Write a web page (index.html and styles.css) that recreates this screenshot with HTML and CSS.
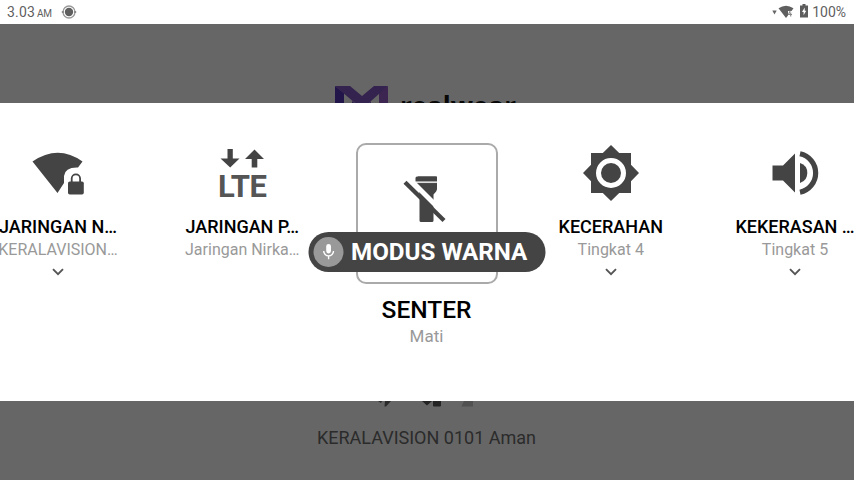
FILE: index.html
```html
<!DOCTYPE html>
<html lang="id">
<head>
<meta charset="utf-8">
<title>Kontrol</title>
<link rel="stylesheet" href="styles.css">
</head>
<body>
<header class="status">
  <span class="clock">3.03<small>AM</small></span>
  <svg class="status-cam" width="16" height="16" viewBox="0 0 16 16"><circle cx="8" cy="8" r="6" fill="none" stroke="#999" stroke-width="1.300"/><circle cx="8" cy="8" r="4.200" fill="#5f5f5f"/><path d="M.800 8h2M13.200 8h2" stroke="#777" stroke-width="1.600"/></svg>
  <div class="status-right">
    <svg width="5" height="5" viewBox="0 0 5 5"><path d="M.3.5h4.400L2.500 4.500z" fill="#666"/></svg>
    <svg class="status-wifi" width="16" height="14" viewBox="0 0 16 14"><path d="M.5 3.200Q8-1.800 15.500 3.200L13.500 6H10v4.500L8 13z" fill="#5f5f5f"/><path d="M12.300 5.500L10.500 9.500H14M12.700 7.500v4" fill="none" stroke="#888" stroke-width="1.100"/></svg>
    <svg class="status-bat" width="8" height="14" viewBox="0 0 8 14"><path d="M2.500 0h3v1.500H8V13.500H0V1.500h2.500z" fill="#5c5c5c"/><path d="M4.700 3.500L2 8h1.600v3.200L6.200 6.800H4.700z" fill="#fff"/></svg>
    <span class="percent">100%</span>
  </div>
</header>

<section class="backdrop backdrop-top">
  <svg class="logo" width="53" height="53" viewBox="0 0 53 53"><path d="M0 0L9 7V53H0z" fill="#21154a"/><path d="M53 0L44 7V53H53z" fill="#3c2550"/><path d="M0 0H15L27 10 39 0H53L27 23z" fill="#35234f"/><path d="M17 15L27 23V40L17 31z" fill="#2a1c4c"/><path d="M36 15L27 23V40L36 31z" fill="#382551"/></svg>
  <span class="brand">realwear</span>
</section>

<main class="panel">
  <article class="tile">
    <svg class="icon" width="60" height="60" viewBox="0 0 60 60"><path d="M4.500 18.500Q30 1 54.500 18.500L50 24.500Q37 24 36 33V40L29.500 50z" fill="#444"/><rect x="40" y="38.500" width="15.800" height="13" rx="1.800" fill="#444"/><path d="M43.700 39V35.500a4.200 4.200 0 0 1 8.400 0V39" fill="none" stroke="#444" stroke-width="1.800"/></svg>
    <h2>JARINGAN N…</h2>
    <p>KERALAVISION…</p>
    <svg class="chevron" width="12" height="8" viewBox="0 0 12 8"><path d="M1 1.200L6 6.200 11 1.200" fill="none" stroke="#555" stroke-width="1.900"/></svg>
  </article>
  <article class="tile">
    <div class="lte">
      <svg width="44" height="19" viewBox="0 0 44 19"><path d="M7.500 0H12.800V9.500H19.500L10.200 18.500.5 9.500H7.500z" fill="#444"/><path d="M31.700 18.500V10H25L34.500.5 44 10H37.300V18.500z" fill="#444"/></svg>
      <b>LTE</b>
    </div>
    <h2>JARINGAN P…</h2>
    <p>Jaringan Nirka…</p>
  </article>
  <article class="tile selected">
    <div class="frame">
      <svg width="46" height="50" viewBox="0 0 46 50"><path d="M15 1.500H34V14Q34 16 30.500 19.500V45.500Q30.500 47 29 47H18Q16.500 47 16.500 45.500V22z" fill="#444"/><path d="M14 1.500Q12.500 1.500 12.500 3V10H34V3Q34 1.500 32.500 1.500z" fill="#444"/><path d="M12.500 7.200H34" stroke="#dedede" stroke-width="1.700"/><path d="M5.500 3L34.500 32" stroke="#fff" stroke-width="5"/><path d="M2 7.300L41 45.500" stroke="#444" stroke-width="4.300"/></svg>
    </div>
    <h1>SENTER</h1>
    <p>Mati</p>
    <div class="voice">
      <span class="mic"><svg width="14" height="18" viewBox="0 0 14 18"><rect x="4.700" y="1" width="4.800" height="9.500" rx="2.400" fill="#fff"/><path d="M2.200 8a4.900 4.900 0 0 0 9.800 0M7.100 13v3.200" fill="none" stroke="#fff" stroke-width="1.400"/></svg></span>
      <span class="command">MODUS WARNA</span>
    </div>
  </article>
  <article class="tile">
    <svg class="icon" width="60" height="60" viewBox="0 0 60 60"><path d="M30 2L38.200 10H50V21.800L58 30 50 38.200V50H38.200L30 58 21.800 50H10V38.200L2 30 10 21.800V10H21.800z" fill="#444"/><circle cx="30" cy="30" r="12.500" fill="#444" stroke="#fff" stroke-width="5"/></svg>
    <h2>KECERAHAN</h2>
    <p>Tingkat 4</p>
    <svg class="chevron" width="12" height="8" viewBox="0 0 12 8"><path d="M1 1.200L6 6.200 11 1.200" fill="none" stroke="#555" stroke-width="1.900"/></svg>
  </article>
  <article class="tile">
    <svg class="icon" width="60" height="60" viewBox="0 0 60 60"><path d="M7.500 22.500H18L30 10.500V49.500L18 37.500H7.500z" fill="#444"/><path d="M35 20A10.500 10.500 0 0 1 35 40z" fill="#444"/><path d="M35 10.800A19.600 19.600 0 0 1 35 49.200" fill="none" stroke="#444" stroke-width="5.200"/></svg>
    <h2>KEKERASAN …</h2>
    <p>Tingkat 5</p>
    <svg class="chevron" width="12" height="8" viewBox="0 0 12 8"><path d="M1 1.200L6 6.200 11 1.200" fill="none" stroke="#555" stroke-width="1.900"/></svg>
  </article>
</main>

<section class="backdrop backdrop-bottom">
  <svg class="peek" width="100" height="6" viewBox="0 0 100 6"><path d="M1 0l3 2 1-2zM8 0h6L9 5.500H7.500z" fill="#2b2b2b"/><path d="M45 0H55L50 4.500zM56 0H64V4.500Q64 5.500 63 5.500H57Q56 5.500 56 4.500z" fill="#242424"/><path d="M87 0H96V5.500H84.500z" fill="#515151"/></svg>
  <p>KERALAVISION 0101 Aman</p>
</section>
</body>
</html>
```
FILE: styles.css
```css
* {
  box-sizing: border-box;
}

body {
  margin: 0;
  width: 854px;
  height: 480px;
  overflow: hidden;
  display: flex;
  flex-direction: column;
  font-family: Roboto, "Liberation Sans", sans-serif;
  background: #666;
}

h1, h2, p {
  margin: 0;
  white-space: nowrap;
}

svg {
  display: block;
  flex: none;
}

.status {
  height: 24px;
  flex: none;
  display: flex;
  align-items: center;
  padding: 0 8px 0 7px;
  background: #fff;
  color: #5f5f5f;
  font-size: 14px;
}

.clock {
  letter-spacing: .2px;
}

.clock small {
  font-size: 10px;
  margin-left: 2px;
  letter-spacing: -.4px;
}

.status-cam {
  margin-left: 9px;
}

.status-right {
  margin-left: auto;
  display: flex;
  align-items: center;
}

.status-wifi {
  margin-left: 1px;
}

.status-bat {
  margin: 0 4px 2px 6px;
}

.backdrop {
  background: #666;
  overflow: hidden;
}

.backdrop-top {
  height: 79px;
  flex: none;
  display: flex;
  align-items: flex-start;
  padding: 62px 0 0 335px;
}

.brand {
  margin-left: 12px;
  font: 700 26px/40px "Open Sans", sans-serif;
  color: #080808;
}

.panel {
  height: 298px;
  flex: none;
  display: flex;
  justify-content: center;
  padding-right: 1px;
  background: #fff;
}

.tile {
  flex: 0 0 184.25px;
  display: flex;
  flex-direction: column;
  align-items: center;
  padding-top: 40px;
}

.tile h2 {
  margin-top: 13px;
  font-size: 18px;
  line-height: 22px;
  font-weight: 500;
  color: #000;
}

.tile p {
  margin-top: 1px;
  font-size: 16px;
  line-height: 22px;
  color: #999;
}

.chevron {
  margin-top: 7px;
}

.lte {
  height: 60px;
  padding-top: 6px;
  display: flex;
  flex-direction: column;
  align-items: center;
  color: #555;
}

.lte b {
  font-size: 31px;
  line-height: 38px;
  letter-spacing: -.5px;
}

.selected {
  position: relative;
}

.frame {
  width: 142px;
  height: 141px;
  border: 2px solid #aaa;
  border-radius: 10px;
  padding: 30px 0 0 45px;
}

.selected h1 {
  margin-top: 12px;
  font-size: 24.5px;
  line-height: 28px;
  font-weight: 500;
}

.selected p {
  margin-top: 1px;
  font-size: 17px;
}

.voice {
  position: absolute;
  top: 129px;
  left: 50%;
  transform: translateX(-50%);
  width: 237px;
  height: 40px;
  border-radius: 20px;
  display: flex;
  align-items: center;
  padding-left: 5px;
  background: #444;
}

.mic {
  width: 30px;
  height: 30px;
  border-radius: 50%;
  display: flex;
  align-items: center;
  justify-content: center;
  background: #999;
}

.command {
  margin-left: 8px;
  font-size: 24.2px;
  font-weight: 700;
  line-height: 41px;
  white-space: nowrap;
  color: #fff;
}

.backdrop-bottom {
  flex: 1;
  display: flex;
  flex-direction: column;
  align-items: center;
  padding-right: 1px;
}

.backdrop-bottom p {
  margin-top: 20px;
  font-size: 18px;
  line-height: 22px;
  color: #2b2b2b;
}
```
